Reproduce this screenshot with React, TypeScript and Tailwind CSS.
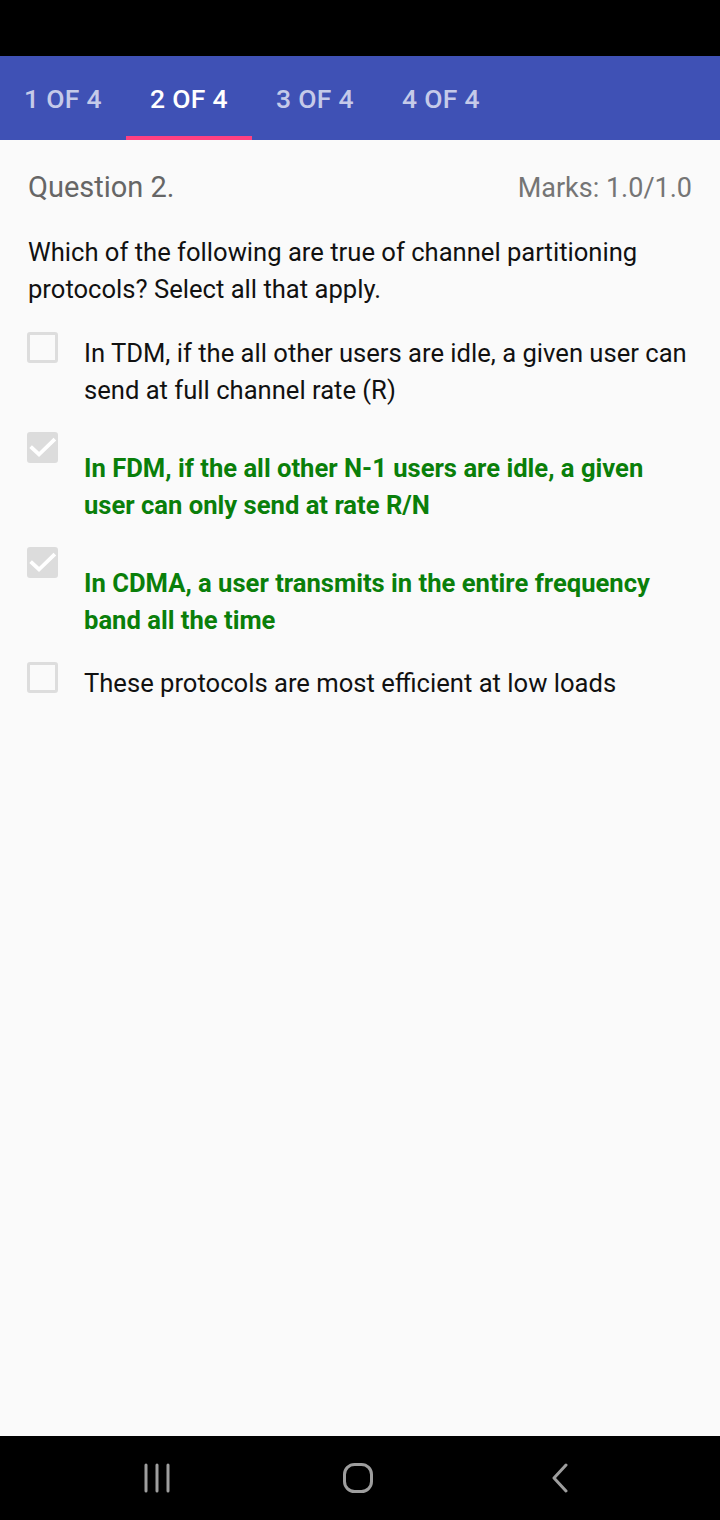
interface Option {
  text: string;
  checked: boolean;
}

const options: Option[] = [
  { text: "In TDM, if the all other users are idle, a given user can send at full channel rate (R)", checked: false },
  { text: "In FDM, if the all other N-1 users are idle, a given user can only send at rate R/N", checked: true },
  { text: "In CDMA, a user transmits in the entire frequency band all the time", checked: true },
  { text: "These protocols are most efficient at low loads", checked: false },
];

const tabs = ["1 OF 4", "2 OF 4", "3 OF 4", "4 OF 4"];

export default function App() {
  return (
    <div className="w-[720px] h-[1520px] flex flex-col bg-[#fafafa] font-['Roboto',sans-serif]">
      {/* status bar */}
      <div className="h-[56px] bg-black" />

      {/* tabs */}
      <div className="h-[84px] bg-[#3f51b5] flex">
        {tabs.map((t, i) => (
          <div key={t} className="w-[126px] h-full relative flex items-center justify-center pt-[2px]">
            <span
              className={`text-[26.5px] font-medium tracking-[0.3px] ${
                i === 1 ? "text-white" : "text-[#c5cae9]"
              }`}
            >
              {t}
            </span>
            {i === 1 && <div className="absolute left-0 right-0 bottom-0 h-[4px] bg-[#ff4081]" />}
          </div>
        ))}
      </div>

      {/* content */}
      <div className="flex-1 px-[28px] pt-[29px]">
        <div className="flex justify-between items-center h-[38px]">
          <span className="text-[29px] text-[#666666]">Question 2.</span>
          <span className="text-[27px] text-[#757575]">Marks: 1.0/1.0</span>
        </div>
        <p className="mt-[27px] text-[25.6px] leading-[37px] text-[#111]">
          Which of the following are true of channel partitioning protocols? Select all that apply.
        </p>
        <div className="mt-[24px] flex flex-col gap-[23.5px]">
          {options.map((o) => (
            <div key={o.text} className="flex items-start">
              {o.checked ? (
                <svg width="31" height="31" viewBox="0 0 31 31" className="shrink-0 -ml-[1px]">
                  <rect x="0" y="0" width="31" height="31" rx="3" fill="#dcdcdc" />
                  <polyline
                    points="5,16 12,22.5 26.5,8.5"
                    fill="none"
                    stroke="#ffffff"
                    strokeWidth="3.8"
                    strokeLinecap="square"
                  />
                </svg>
              ) : (
                <div className="w-[31px] h-[31px] shrink-0 -ml-[1px] rounded-[3px] border-[3px] border-[#dddddd]" />
              )}
              <p
                className={`ml-[26px] text-[25.6px] leading-[37px] ${
                  o.checked ? "pt-[17.5px] font-bold text-[#0a7f0a]" : "pt-[2.5px] text-[#111]"
                }`}
              >
                {o.text}
              </p>
            </div>
          ))}
        </div>
      </div>

      {/* nav bar */}
      <div className="h-[84px] bg-black flex items-center pl-[143px]">
        <svg width="28" height="30" viewBox="0 0 28 30">
          <g stroke="#9e9e9e" strokeWidth="3" strokeLinecap="round">
            <line x1="3" y1="2" x2="3" y2="28" />
            <line x1="14" y1="2" x2="14" y2="28" />
            <line x1="25" y1="2" x2="25" y2="28" />
          </g>
        </svg>
        <svg width="30" height="30" viewBox="0 0 30 30" className="ml-[172px]">
          <rect x="1.5" y="1.5" width="27" height="27" rx="10" fill="none" stroke="#9e9e9e" strokeWidth="3" />
        </svg>
        <svg width="18" height="30" viewBox="0 0 18 30" className="ml-[178px]">
          <polyline points="15,2 3,15 15,28" fill="none" stroke="#9e9e9e" strokeWidth="3" strokeLinecap="round" strokeLinejoin="round" />
        </svg>
      </div>
    </div>
  );
}
